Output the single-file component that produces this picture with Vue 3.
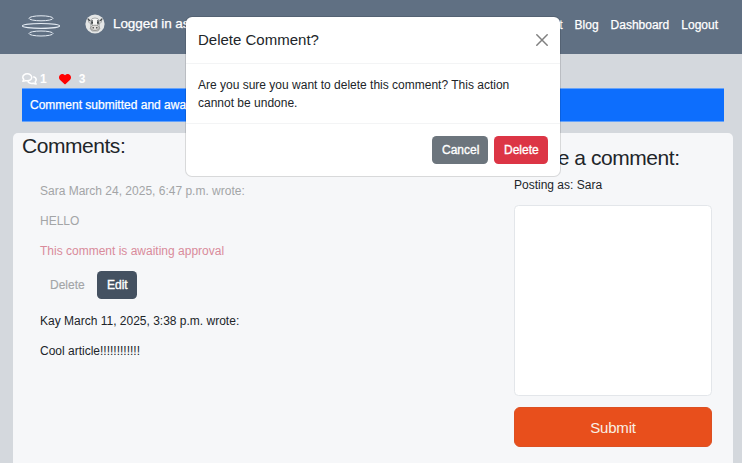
<script setup>
import { ref } from 'vue'

const navLinks = ['About', 'Blog', 'Dashboard', 'Logout']
const draft = ref('')
const comments = [
  { id: 1, meta: 'Sara March 24, 2025, 6:47 p.m. wrote:', text: 'HELLO', pending: true },
  { id: 2, meta: 'Kay March 11, 2025, 3:38 p.m. wrote:', text: 'Cool article!!!!!!!!!!!!', pending: false }
]
</script>

<template>
  <div class="page">
    <header class="navbar">
      <svg class="logo" viewBox="0 0 40 24" fill="none" stroke="#e6edf5">
        <ellipse cx="20" cy="4.3" rx="12" ry="2.5" />
        <ellipse cx="20" cy="11.9" rx="18.5" ry="2.4" stroke-width="1.2" />
        <ellipse cx="20" cy="19.5" rx="12" ry="2.5" />
      </svg>
      <svg class="avatar" viewBox="0 0 20 20">
        <circle cx="10" cy="10" r="9.6" fill="#e4e6e6" />
        <path d="M3.2 5.2 5.4 6.6 7.2 4.6 10 4l2.8.6 1.8 2 2.2-1.4-.5 3.2-2 1-.3 3.2.8 2.2L13 17H7l-1.8-2.2.8-2.2-.3-3.2-2-1Z" fill="#f8f8f6" stroke="#8c8f90" stroke-width=".7" />
        <path d="M5.4 6.600 8 5.800l-.3 5-1.800-.4ZM14.600 6.600 12 5.800l.3 5 1.800-.4Z" fill="#787c7d" />
        <path d="M2.800 4.600 4.800 7M17.200 4.600 15.200 7" stroke="#4a4e50" stroke-width="1.200" />
        <ellipse cx="10" cy="13.800" rx="4.200" ry="2.600" fill="#deddda" stroke="#7c7c79" stroke-width=".8" />
        <path d="M8.200 13v1.400M11.800 13v1.400" stroke="#3e3f3e" stroke-width="1.200" />
        <path d="M7.200 7.800v1.600M12.800 7.800v1.600" stroke="#303536" stroke-width="1.300" />
      </svg>
      <span class="login">Logged in as Sara</span>
      <nav class="links">
        <a v-for="link in navLinks" :key="link">{{ link }}</a>
      </nav>
    </header>

    <div class="stats">
      <svg class="bubbles" viewBox="0 0 15 12" fill="none" stroke="#fff" stroke-width="1.5" stroke-linejoin="round">
        <path d="M5.200.8C2.700.8.8 2.300.8 4.200c0 .9.4 1.600 1 2.200L.9 8.300c1.100 0 1.900-.3 2.600-.7.5.2 1.100.2 1.700.2 2.500 0 4.500-1.500 4.500-3.500S7.700.8 5.200.8Z" />
        <path d="M11.200 3.700c1.900.3 3 1.500 3 3.100 0 .8-.4 1.500-1 2.200l.9 2.100c-1.200 0-2.100-.4-2.800-.9-.5.2-1 .2-1.500.2-1.800 0-3.300-.8-4-2.300" />
      </svg>
      <strong class="count">1</strong>
      <svg class="heart" viewBox="0 0 512 512">
        <path fill="#f00" d="M47.600 300.400 228.300 469.100c7.500 7 17.400 10.900 27.700 10.900s20.200-3.900 27.700-10.900L464.400 300.400c30.400-28.300 47.600-68 47.600-109.500v-5.800c0-69.900-50.500-129.500-119.400-141C347 36.500 300.600 51.400 268 84L256 96 244 84c-32.600-32.600-79-47.500-124.600-39.900C50.500 55.600 0 115.200 0 185.100v5.800c0 41.500 17.200 81.200 47.600 109.500z" />
      </svg>
      <strong class="count">3</strong>
    </div>

    <div class="alert">Comment submitted and awaiting approval</div>

    <main class="card">
      <section class="comments">
        <h3>Comments:</h3>
        <article v-for="c in comments" :key="c.id" class="comment" :class="{ pending: c.pending }">
          <p>{{ c.meta }}</p>
          <p>{{ c.text }}</p>
          <template v-if="c.pending">
            <p class="notice">This comment is awaiting approval</p>
            <div class="actions">
              <button class="btn plain">Delete</button>
              <button class="btn edit">Edit</button>
            </div>
          </template>
        </article>
      </section>
      <section class="compose">
        <h3>Leave a comment:</h3>
        <p>Posting as: Sara</p>
        <textarea v-model="draft"></textarea>
        <button class="submit">Submit</button>
      </section>
    </main>

    <div class="modal" role="dialog">
      <div class="modal-header">
        <h5>Delete Comment?</h5>
        <svg class="close" viewBox="0 0 12 12" stroke="#808080" stroke-width="1.5" stroke-linecap="round">
          <path d="M.8.8l10.400 10.400M11.200.8.8 11.200" />
        </svg>
      </div>
      <div class="modal-body">Are you sure you want to delete this comment? This action cannot be undone.</div>
      <div class="modal-footer">
        <button class="btn cancel">Cancel</button>
        <button class="btn danger">Delete</button>
      </div>
    </div>
  </div>
</template>

<style>
body {
  background: #d4d8dd;
}
</style>

<style scoped>
.page {
  position: relative;
  box-sizing: border-box;
  width: 742px;
  height: 463px;
  overflow: hidden;
  background: #d4d8dd;
  color: #212529;
  font: 12px/18px "Liberation Sans", Arial, sans-serif;
}
.page * {
  box-sizing: border-box;
}
h3, h5, p {
  margin: 0;
  font-weight: 400;
}
button {
  font-family: inherit;
}
.navbar {
  display: flex;
  align-items: center;
  height: 54px;
  padding: 0 24px 6px 21px;
  background: #607083;
  color: #fff;
  -webkit-text-stroke: 0.25px #fff;
}
.logo {
  width: 40px;
  height: 24px;
  margin-top: 3px;
}
.avatar {
  width: 20px;
  height: 20px;
  margin-left: 24px;
}
.login {
  margin-left: 8px;
  font-size: 13.5px;
  letter-spacing: -0.08px;
}
.links {
  display: flex;
  gap: 12px;
  margin-left: auto;
  padding-top: 2px;
}
.stats {
  display: flex;
  align-items: center;
  height: 34px;
  padding: 15px 0 0 22px;
  color: #fff;
}
.bubbles {
  width: 15px;
  height: 12px;
  margin-right: 3px;
}
.heart {
  width: 12px;
  height: 12px;
  margin: 0 8px 0 12px;
}
.alert {
  height: 34px;
  margin: 0 18px 0 22px;
  padding: 7px 8px;
  border: solid #66a3fa;
  border-width: 1px 0;
  background: #0d6efd;
  color: #fff;
  -webkit-text-stroke: 0.25px #fff;
}
.card {
  display: flex;
  justify-content: space-between;
  height: 345px;
  margin: 11px 9px 0 13px;
  padding: 0 21px 0 9px;
  border-radius: 5px;
  background: #f6f7f9;
}
h3 {
  font-size: 21px;
  line-height: 25px;
  letter-spacing: -0.45px;
  white-space: nowrap;
}
.comments h3 {
  margin-bottom: 24px;
}
.comment {
  padding-left: 18px;
}
.comment p {
  margin-bottom: 12px;
}
.pending {
  color: #a3a5a7;
}
.pending .notice {
  margin-bottom: 11px;
  color: #d98b9b;
}
.actions {
  display: flex;
  margin-bottom: 13px;
}
.btn {
  height: 28px;
  padding: 0 9px;
  border: 1px solid transparent;
  border-radius: 4.5px;
  color: #fff;
  font-size: 12px;
  line-height: 18px;
  -webkit-text-stroke: 0.35px currentColor;
}
.plain {
  width: 53px;
  margin-right: 4px;
  background: transparent;
  color: #a3a5a7;
  -webkit-text-stroke-width: 0.15px;
}
.edit {
  width: 40px;
  background: #445161;
}
.compose {
  display: flex;
  flex-direction: column;
  width: 198px;
  padding-top: 12px;
}
.compose p {
  margin: 6px 0 11px;
}
textarea {
  height: 191px;
  border: 1px solid #e3e6ea;
  border-radius: 4.5px;
  background: #fff;
  resize: none;
}
.submit {
  height: 40px;
  margin-top: 11px;
  border: 1px solid #dc5023;
  border-radius: 6px;
  background: #e84f1c;
  color: #f9f0e4;
  font-size: 15px;
  letter-spacing: -0.2px;
}
.modal {
  position: absolute;
  top: 16px;
  left: 185px;
  width: 376px;
  height: 161px;
  border: 1px solid rgba(0, 0, 0, 0.12);
  border-radius: 7px;
  background: #fff;
  background-clip: padding-box;
}
.modal-header {
  display: flex;
  align-items: center;
  justify-content: space-between;
  height: 47px;
  padding: 0 12px;
  border-bottom: 1px solid #f3f4f5;
}
.modal-header h5 {
  font-size: 15px;
}
.close {
  width: 12px;
  height: 12px;
}
.modal-body {
  height: 59px;
  padding: 12px;
}
.modal-footer {
  display: flex;
  justify-content: flex-end;
  gap: 6px;
  padding: 12px;
  border-top: 1px solid #f3f4f5;
}
.cancel {
  width: 56px;
  background: #6c757d;
}
.danger {
  width: 54px;
  background: #dc3545;
}
</style>
